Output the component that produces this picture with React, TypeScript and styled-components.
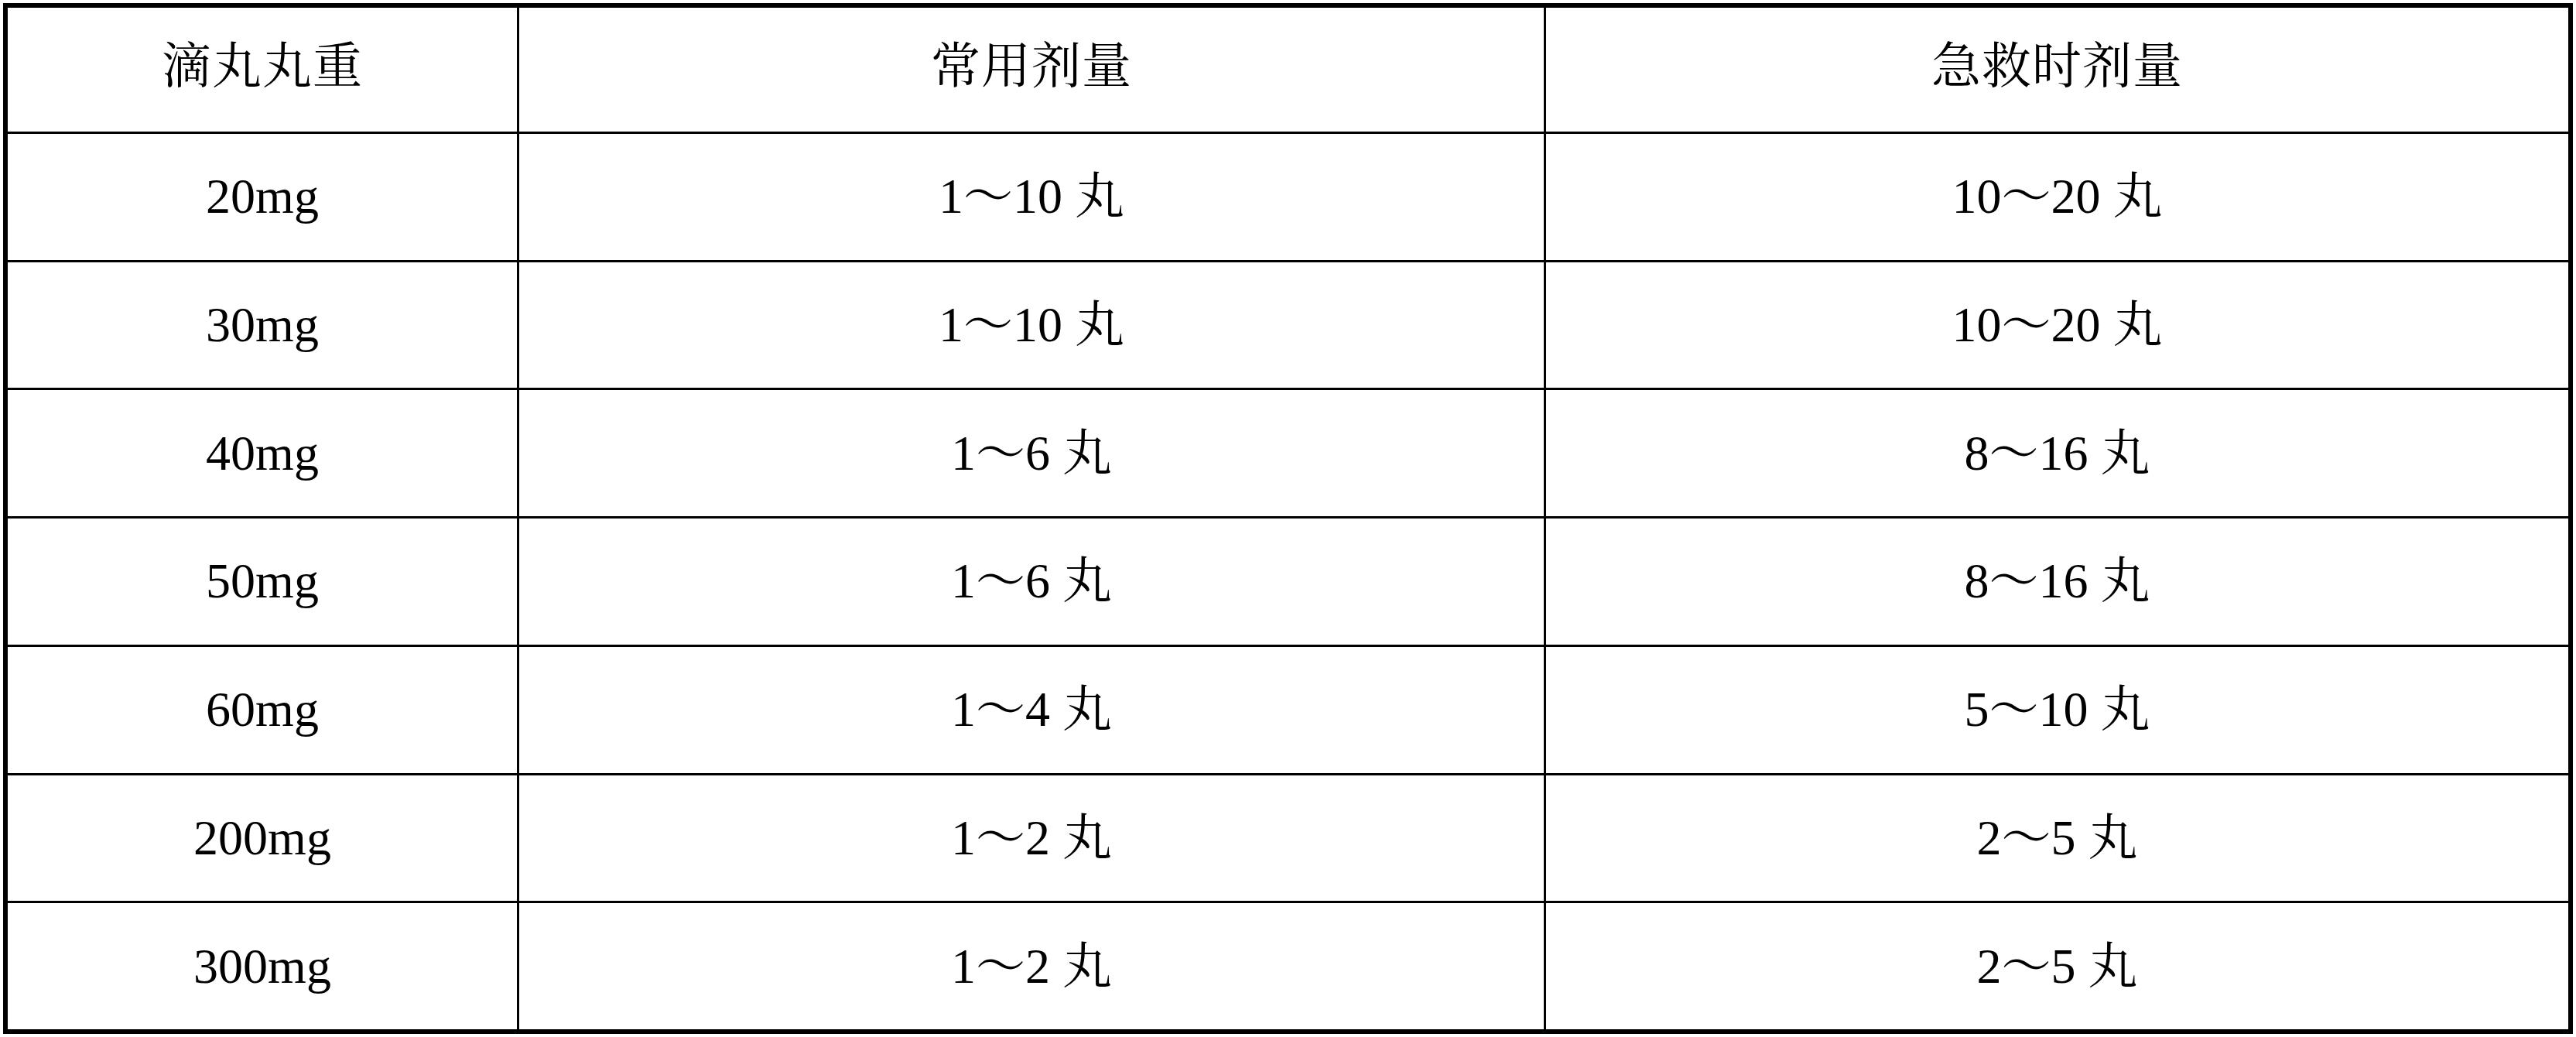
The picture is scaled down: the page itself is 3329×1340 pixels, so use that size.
import styled, { createGlobalStyle } from "styled-components";

const headers = ["滴丸丸重", "常用剂量", "急救时剂量"];

const rows: string[][] = [
  ["20mg", "1～10 丸", "10～20 丸"],
  ["30mg", "1～10 丸", "10～20 丸"],
  ["40mg", "1～6 丸", "8～16 丸"],
  ["50mg", "1～6 丸", "8～16 丸"],
  ["60mg", "1～4 丸", "5～10 丸"],
  ["200mg", "1～2 丸", "2～5 丸"],
  ["300mg", "1～2 丸", "2～5 丸"],
];

const GlobalStyle = createGlobalStyle`
  html, body {
    margin: 0;
    padding: 0;
    background: #ffffff;
  }
`;

const Page = styled.div`
  padding: 4px;
`;

const Table = styled.div`
  display: grid;
  grid-template-columns: 658px 1324px 1321px;
  grid-template-rows: 160px repeat(7, 1fr);
  gap: 3px;
  height: 1320px;
  border: 6px solid #000;
  background: #000;
`;

const Cell = styled.div<{ $head?: boolean }>`
  display: flex;
  align-items: center;
  justify-content: center;
  background: #fff;
  color: #000;
  font-family: "Liberation Serif", "Noto Serif CJK SC", "Noto Sans CJK SC", serif;
  font-size: 64px;
  line-height: 1;
  white-space: pre;
  padding-bottom: ${({ $head }) => ($head ? "8px" : "0")};
  letter-spacing: ${({ $head }) => ($head ? "1px" : "0")};
`;

export default function App() {
  return (
    <>
      <GlobalStyle />
      <Page>
        <Table role="table">
          {headers.map((h) => (
            <Cell key={h} $head role="columnheader">
              {h}
            </Cell>
          ))}
          {rows.map((r) =>
            r.map((v, i) => (
              <Cell key={r[0] + i} role="cell">
                {v}
              </Cell>
            ))
          )}
        </Table>
      </Page>
    </>
  );
}
